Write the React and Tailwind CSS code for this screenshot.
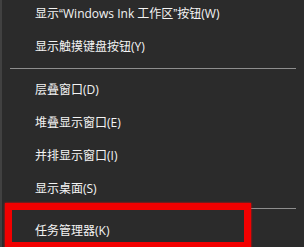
const q = (c) => <span style={{ fontFamily: '"Liberation Sans", sans-serif' }}>{c}</span>

const items = [
  { label: <>显示{q('“')}Windows Ink 工作区{q('”')}按钮(W)</> },
  { label: '显示触摸键盘按钮(Y)' },
  { sep: true, gap: 'h-[10px]', line: 'mt-[5px]' },
  { label: '层叠窗口(D)' },
  { label: '堆叠显示窗口(E)' },
  { label: '并排显示窗口(I)' },
  { label: '显示桌面(S)' },
  { sep: true, gap: 'h-[9px]', line: 'mt-[3px]' },
  { label: '任务管理器(K)' },
]

export default function App() {
  return (
    <div
      className="relative w-[304px] h-[247px] overflow-hidden bg-[#2b2b2b] border-l-2 border-[#414141] text-[#f4f4f4] text-[12px] leading-none"
      style={{ fontFamily: '"Open Sans", "Noto Sans CJK SC", sans-serif' }}
    >
      <div className="-mt-[3px] flex flex-col">
        {items.map((it, i) =>
          it.sep ? (
            <div key={i} className={`${it.gap} pl-[8px] pr-[8px]`}>
              <div className={`${it.line} h-px bg-[#8e8e8e]`} />
            </div>
          ) : (
            <div key={i} className="h-[33px] flex items-center pl-[33px] whitespace-nowrap">
              {it.label}
            </div>
          )
        )}
      </div>

      {/* red highlight annotation */}
      <div className="absolute left-[3px] top-[203px] w-[246px] h-[46px] border-[7px] border-[#f20000] shadow-[0_0_2px_#ff0000]" />
    </div>
  )
}
